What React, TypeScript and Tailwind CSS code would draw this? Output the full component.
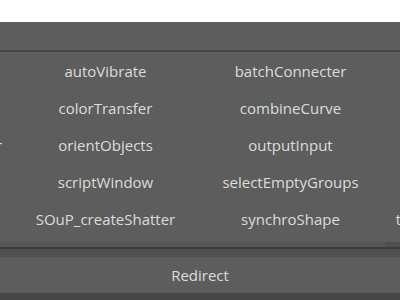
import React from "react";

const rows: string[][] = [
  ["", "autoVibrate", "batchConnecter", ""],
  ["", "colorTransfer", "combineCurve", ""],
  ["mirrorWeightConverter", "orientObjects", "outputInput", ""],
  ["", "scriptWindow", "selectEmptyGroups", ""],
  ["", "SOuP_createShatter", "synchroShape", "tweenMachineWindow"],
];

const ToolButton = ({ label }: { label: string }) => (
  <button
    type="button"
    className="w-[185px] shrink-0 h-[37px] flex items-center justify-center text-[15px] text-[#dcdcdc] bg-[#5d5d5d] whitespace-nowrap"
  >
    {label}
  </button>
);

const App = () => {
  return (
    <div
      className="w-[400px] h-[300px] bg-white flex flex-col overflow-hidden"
      style={{ fontFamily: '"Open Sans", "Noto Sans", sans-serif' }}
    >
      <div className="h-[22px] shrink-0 bg-white" />
      <div className="h-[28px] shrink-0 bg-[#5d5d5d]" />
      <div className="h-[2px] shrink-0 bg-[#454545]" />

      <div className="h-[190px] shrink-0 bg-[#5d5d5d] overflow-hidden flex flex-col pt-[1px]">
        {rows.map((row, i) => (
          <div key={i} className="flex ml-[-172px]">
            {row.map((label, j) => (
              <ToolButton key={j} label={label} />
            ))}
          </div>
        ))}
      </div>

      <div className="h-[5px] shrink-0 bg-[#575757] flex justify-end">
        <div className="w-[15px] bg-[#505050]" />
      </div>
      <div className="h-[2px] shrink-0 bg-[#3c3c3c]" />
      <div className="h-[8px] shrink-0 bg-[#505050]" />

      <button
        type="button"
        className="h-[36px] shrink-0 w-full bg-[#5d5d5d] text-[15px] text-[#dcdcdc] flex items-center justify-center"
      >
        Redirect
      </button>
      <div className="flex-1 bg-[#474747]" />
    </div>
  );
};

export default App;
